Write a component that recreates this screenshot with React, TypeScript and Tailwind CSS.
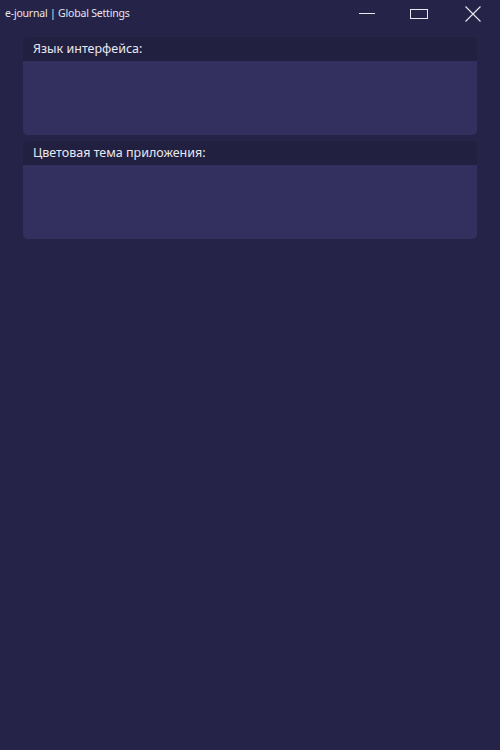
import React from "react";

const Section: React.FC<{ title: string }> = ({ title }) => (
  <div className="rounded-[5px] overflow-hidden">
    <div className="bg-[#222040] h-[24px] pl-[10px] flex items-center text-[12.5px] text-[#e8e8f0]">
      {title}
    </div>
    <div className="bg-[#33305f] h-[74px]" />
  </div>
);

export default function App() {
  return (
    <div
      className="w-[500px] h-[750px] bg-[#252347] flex flex-col"
      style={{ fontFamily: '"Noto Sans", "DejaVu Sans", sans-serif' }}
    >
      <div className="h-[27px] flex items-center justify-between">
        <span className="pl-[5px] text-[10.5px] tracking-[-0.2px] text-[#e6e6ee]">e-journal | Global Settings</span>
        <div className="flex items-center h-full">
          <div className="w-[52px] h-full flex items-center justify-center">
            <svg width="16" height="2" viewBox="0 0 16 2">
              <rect x="0" y="0" width="16" height="1" fill="#e8e8f0" />
            </svg>
          </div>
          <div className="w-[52px] h-full flex items-center justify-center">
            <svg width="18" height="10" viewBox="0 0 18 10">
              <rect x="0.5" y="0.5" width="17" height="9" fill="none" stroke="#e8e8f0" strokeWidth="1" />
            </svg>
          </div>
          <div className="w-[55px] h-full flex items-center justify-center">
            <svg width="16" height="16" viewBox="0 0 16 16">
              <path d="M0.5 0.5 L15.5 15.5 M15.5 0.5 L0.5 15.5" stroke="#e8e8f0" strokeWidth="1.1" />
            </svg>
          </div>
        </div>
      </div>
      <div className="px-[23px] pt-[10px] flex flex-col gap-[6px]">
        <Section title="Язык интерфейса:" />
        <Section title="Цветовая тема приложения:" />
      </div>
    </div>
  );
}
